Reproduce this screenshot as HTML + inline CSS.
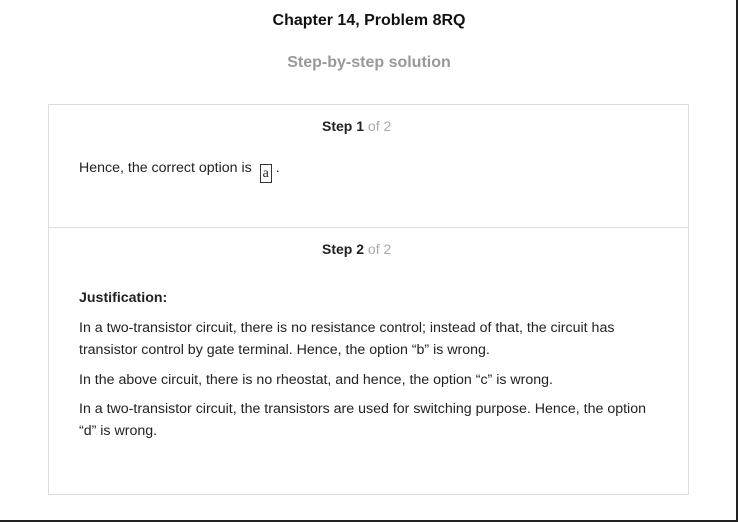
<!DOCTYPE html>
<html><head><style>
body{margin:0;width:738px;height:522px;position:relative;background:#fff;font-family:"Liberation Sans",Arial,sans-serif;overflow:hidden}
.frame{position:absolute;left:0;top:0;width:736px;height:520px;border-right:2px solid #222;border-bottom:2px solid #222}
.t{position:absolute;white-space:nowrap}
.card{position:absolute;left:48px;top:104px;width:639px;height:389px;border:1px solid #ddd}
.div{position:absolute;left:49px;top:227px;width:639px;height:1px;background:#ddd}
p{position:absolute;left:79px;margin:0;font-size:14.2px;color:#222;line-height:22px;width:575px}
.step{font-size:14px;font-weight:bold;color:#222;left:322px}
.step span{font-weight:normal;color:#aaa}
</style></head><body>
<div class="frame"></div>
<div class="t" style="left:0;width:738px;text-align:center;top:12px;font-size:16px;font-weight:bold;color:#111">Chapter 14, Problem 8RQ</div>
<div class="t" style="left:0;width:738px;text-align:center;top:54px;font-size:16px;font-weight:bold;color:#999">Step-by-step solution</div>
<div class="card"></div>
<div class="div"></div>
<div class="t step" style="top:118px">Step 1 <span>of 2</span></div>
<p style="top:157px">Hence, the correct option is &nbsp;<span style="display:inline-block;border:1px solid #333;font-family:'Liberation Serif',serif;font-size:14px;line-height:15px;padding:1px 2px;vertical-align:-5px">a</span>&nbsp;.</p>
<div class="t step" style="top:241px">Step 2 <span>of 2</span></div>
<p style="top:287px;font-weight:bold">Justification:</p>
<p style="top:317px;width:550px">In a two-transistor circuit, there is no resistance control; instead of that, the circuit has transistor control by gate terminal. Hence, the option “b” is wrong.</p>
<p style="top:369px">In the above circuit, there is no rheostat, and hence, the option “c” is wrong.</p>
<p style="top:398px">In a two-transistor circuit, the transistors are used for switching purpose. Hence, the option “d” is wrong.</p>
</body></html>
